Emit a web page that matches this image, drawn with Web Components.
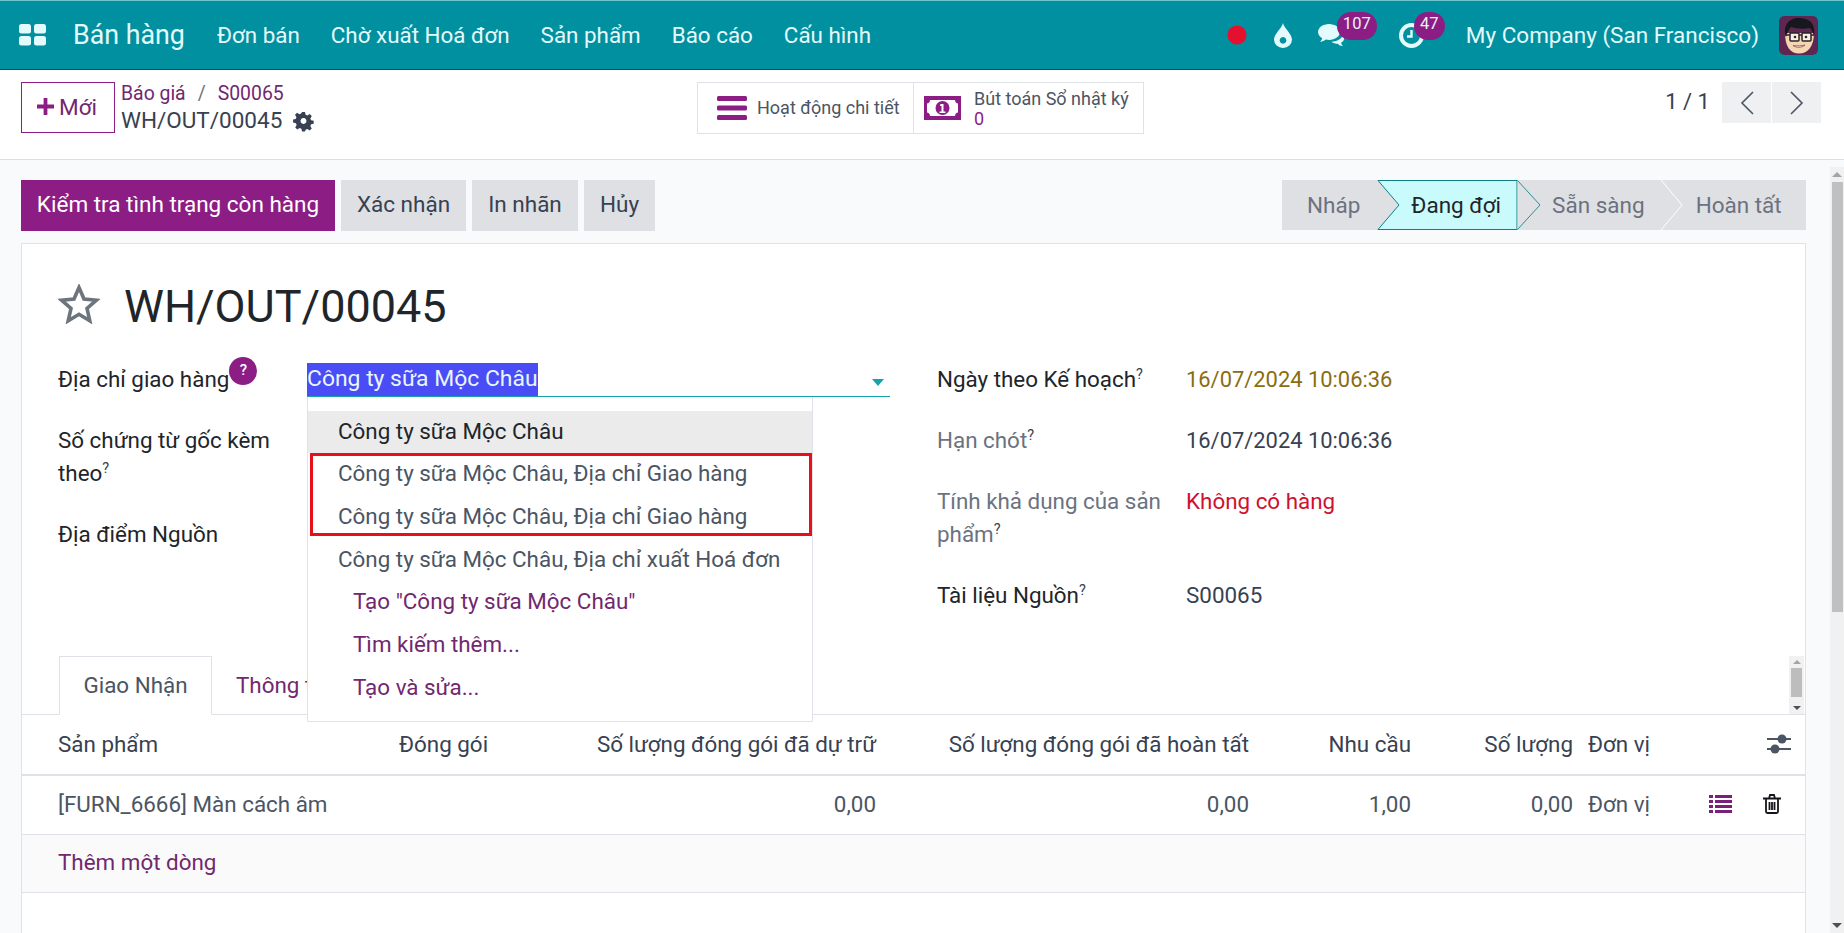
<!DOCTYPE html>
<html lang="vi"><head><meta charset="utf-8"><title>Bán hàng</title>
<style>
html,body{margin:0;height:933px;overflow:hidden;background:#f9fafb;font-family:Roboto,"Liberation Sans",sans-serif;color:#212529}
body{display:flex;flex-direction:column}
:root{--pri:#8c1d85;--link:#71286f;--line:#dee2e6}
</style></head><body>
<x-navbar></x-navbar>
<x-control-panel></x-control-panel>
<x-page>
  <x-action-bar></x-action-bar>
  <x-sheet></x-sheet>
</x-page>
<script>
const def=(name,html)=>{customElements.define(name,class extends HTMLElement{constructor(){super();this.attachShadow({mode:'open'}).innerHTML=html;}});};

def('x-navbar',`<style>
:host{display:flex;align-items:center;height:70px;box-sizing:border-box;background:#00909f;border-top:1px solid #6fc6cf;border-bottom:1px solid #04545c;color:#e4fbfd;font-size:22.4px;flex:none}
svg{display:block}
.apps{margin-left:19px;margin-right:27px}
.brand{font-size:26.8px;margin-right:32px}
.menu{margin-right:31px}
.sp{flex:1}
.ic{position:relative;display:block;flex:none}
.badge{position:absolute;background:#8c1d85;color:#e9f4f6;border-radius:14px;height:28px;font-size:16.5px;line-height:24px;text-align:center;top:-11px}
.co{font-size:22.5px;margin-left:42px;margin-right:20px}
.av{margin-right:26px;border-radius:5px}
</style>
<svg class="apps" width="27" height="22" viewBox="0 0 27 22" fill="#e4fbfd"><rect width="12" height="9.6" rx="2.5"/><rect x="15" width="12" height="9.6" rx="2.5"/><rect y="12" width="12" height="9.6" rx="2.5"/><rect x="15" y="12" width="12" height="9.6" rx="2.5"/></svg>
<span class="brand">Bán hàng</span>
<span class="menu">Đơn bán</span><span class="menu">Chờ xuất Hoá đơn</span><span class="menu">Sản phẩm</span><span class="menu">Báo cáo</span><span class="menu">Cấu hình</span>
<span class="sp"></span>
<svg width="20" height="20" viewBox="0 0 20 20" style="margin-right:27px"><circle cx="10" cy="10" r="9.6" fill="#e3102f"/></svg>
<svg width="18" height="25" viewBox="0 0 18 25" style="margin-right:26px"><path fill-rule="evenodd" fill="#e4fbfd" d="M9 0C10 5 18 11 18 16.5A9 8.5 0 0 1 0 16.5C0 11 8 5 9 0ZM9 14a3.4 3.4 0 1 0 .01 0Z"/></svg>
<span class="ic" style="width:28px;height:24px;margin-right:53px"><svg width="28" height="24" viewBox="0 0 28 24" fill="#e4fbfd"><path d="M11 1C5 1 0 4.6 0 9c0 2.6 1.7 4.8 4.2 6.2-.3 1.4-1.2 2.7-2.3 3.6 2.6 0 4.7-1 6-2.2 1 .2 2 .3 3.1.3 6 0 11-3.5 11-7.9S17 1 11 1Z"/><path d="M24.5 13c-1.6 3.4-6 5.6-11 5.7 1.7 1.4 4 2 6.4 2 1 1.300 2.600 2.300 5.100 2.300-1-.9-1.700-2-1.900-3.200 2.300-1.300 3.400-3.300 2.800-5.300-.3-.5-.8-1.100-1.400-1.500Z"/></svg>
<span class="badge" style="left:19px;width:40px">107</span></span>
<span class="ic" style="width:25px;height:25px"><svg width="25" height="25" viewBox="0 0 25 25" fill="none" stroke="#e4fbfd"><circle cx="12.500" cy="12.500" r="10.500" stroke-width="4"/><path d="M12.500 7v6.500H8" stroke-width="2.400"/></svg>
<span class="badge" style="left:15px;width:31px">47</span></span>
<span class="co">My Company (San Francisco)</span>
<svg class="av" width="39" height="39" viewBox="0 0 39 39"><rect width="39" height="39" rx="5" fill="#5e2752"/><path d="M6 17C6 30 11 37.500 20 37.500S35 30 35 17Z" fill="#f6d6b2"/><path d="M7 21C3 9 11 1 21 2c9 .5 16 5 14 18-1-3-2-6-4-8-6 1-13 1-19-1-2 2-4 6-5 10Z" fill="#17181d"/><rect x="11" y="17" width="9" height="8" rx="1" fill="#fbeee0" stroke="#26262b" stroke-width="1.500"/><rect x="23" y="17" width="9" height="8" rx="1" fill="#fbeee0" stroke="#26262b" stroke-width="1.500"/><path d="M20 19h3M6 19h5M32 19h3" stroke="#26262b" stroke-width="1.500"/><circle cx="16" cy="21" r="1.300" fill="#26262b"/><circle cx="27" cy="21" r="1.300" fill="#26262b"/><path d="M14 29.500c3.500 2.500 8.500 2.500 12-.5-3.500 1-8.500 1.200-12 .5Z" fill="#fff" stroke="#8a4a35" stroke-width=".8"/></svg>`);

def('x-control-panel',`<style>
:host{display:flex;align-items:flex-start;height:90px;box-sizing:border-box;background:#fff;border-bottom:1px solid #dcdfe3;padding:12px 23px 0 21px;flex:none;color:#4b5563}
.new{box-sizing:border-box;width:94px;height:51px;border:1px solid var(--pri);color:var(--link);display:flex;align-items:center;justify-content:center;gap:5px;font-size:22.5px;padding:0 0 2px 0}
.new svg{margin-left:-2px}
.crumb{margin-left:6px;width:576px}
.c1{font-size:19.4px;height:22px;line-height:24px;color:var(--link);white-space:nowrap}
.c1 i{font-style:normal;color:#6b7280;margin:0 12px}
.c2{font-size:22.5px;line-height:27px;color:#374151;display:flex;align-items:center;gap:11px;margin-top:3px}
.stats{display:flex;box-sizing:border-box;width:447px;height:52px;border:1px solid #dfe2e6;color:#4b5563;font-size:18px}
.st{display:flex;align-items:center}
.a{width:216px;padding:0 0 2px 19px;gap:10px;box-sizing:border-box;border-right:1px solid #dfe2e6}
.a svg{margin-top:2px}
.b{padding-left:10px;gap:13px}
.b div{line-height:20px;padding-top:1px}
.b b{display:block;font-weight:400;color:var(--pri)}
.pager{margin-left:auto;display:flex;align-items:flex-start;font-size:22px;color:#374151}
.pager span{line-height:40px;margin-right:11px}
.btn{width:49px;height:41px;background:#eff0f2;display:flex;align-items:center;justify-content:center;margin-left:1px}
</style>
<div class="new"><svg width="17" height="17" viewBox="0 0 18 18" fill="#8c1d85"><path d="M7 0h4v7h7v4h-7v7H7v-7H0V7h7Z"/></svg>Mới</div>
<div class="crumb"><div class="c1">Báo giá<i>/</i>S00065</div><div class="c2">WH/OUT/00045<svg width="21" height="22" viewBox="0 0 24 24" fill="#374151"><path fill-rule="evenodd" d="M10 0h4l.8 3.500 2.400 1 3.100-1.900 2.800 2.800-1.900 3.100 1 2.400 3.500.8v4l-3.500.8-1 2.400 1.900 3.100-2.800 2.800-3.100-1.900-2.400 1L14 26h-4l-.8-3.500-2.400-1-3.100 1.900-2.800-2.800 1.900-3.100-1-2.400L-2 14v-4l3.500-.8 1-2.400L.6 3.700l2.800-2.800 3.100 1.900 2.400-1ZM12 8a4 4 0 1 0 .01 0Z" transform="translate(1.800 1.800) scale(.85)"/></svg></div></div>
<div class="stats"><div class="st a"><svg width="30" height="24" viewBox="0 0 30 24" fill="#8c1d85"><rect width="30" height="5" rx="1.500"/><rect y="9.500" width="30" height="5" rx="1.500"/><rect y="19" width="30" height="5" rx="1.500"/></svg>Hoạt động chi tiết</div>
<div class="st b"><svg width="37" height="24" viewBox="0 0 37 24"><path fill="#8c1d85" fill-rule="evenodd" d="M0 0h37v24H0ZM6 4C6 6 4.500 7.500 3 7.500v9c1.500 0 3 1.500 3 3.500h25c0-2 1.500-3.500 3-3.500v-9c-1.500 0-3-1.500-3-3.500Z"/><circle cx="18.500" cy="12" r="7" fill="#8c1d85"/><path fill="#fff" d="M16.500 8h3v7.500h2V17h-6v-1.500h2V10h-1.500Z"/></svg><div>Bút toán Sổ nhật ký<b>0</b></div></div></div>
<div class="pager"><span>1 / 1</span><div class="btn"><svg width="14" height="24" viewBox="0 0 14 24" fill="none" stroke="#4b5563" stroke-width="1.600"><path d="M13 1 2 12l11 11"/></svg></div><div class="btn"><svg width="14" height="24" viewBox="0 0 14 24" fill="none" stroke="#4b5563" stroke-width="1.600"><path d="M1 1l11 11L1 23"/></svg></div></div>`);

def('x-page',`<style>
:host{display:grid;grid-template-columns:1fr 14px;flex:1;min-height:0;overflow:hidden;position:relative}
.main{padding:20px 24px 0 21px;display:flex;flex-direction:column;min-width:0}
.sb{margin-top:7px;background:#f1f1f1;display:flex;flex-direction:column;align-items:center;height:766px}
.sb u{display:block;width:0;height:0;margin:5px 0;border:5px solid transparent}
.up{border-bottom-color:#a3a3a3!important;border-top:0!important}
.dn{border-top-color:#505050!important;border-bottom:0!important;margin-top:auto!important}
.th{width:11px;height:430px;background:#c0c0c0;margin-top:0}
</style><div class="main"><slot></slot></div>
<div class="sb"><u class="up"></u><div class="th"></div><u class="dn"></u></div>`);

def('x-action-bar',`<style>
:host{display:flex;height:51px;flex:none;font-size:22.5px;color:#374151;margin-bottom:12px}
.b{background:#dee0e4;display:flex;align-items:center;justify-content:center;margin-right:6px;box-sizing:border-box;white-space:nowrap;padding-bottom:3px}
.p{background:var(--pri);color:#fff;width:314px}
</style>
<div class="b p">Kiểm tra tình trạng còn hàng</div><div class="b" style="width:125px">Xác nhận</div><div class="b" style="width:106px">In nhãn</div><div class="b" style="width:71px;margin-right:0">Hủy</div>
<x-statusbar style="margin-left:auto"></x-statusbar>`);

def('x-statusbar',`<style>
:host{display:block;width:524px;height:51px;position:relative;font-size:22.5px;color:#6b7280}
svg{position:absolute;left:0;top:0}
.r{display:flex;height:49px;align-items:center;position:relative;white-space:nowrap}
.r span{position:relative}
.on{color:#212529}
</style>
<svg width="524" height="51" viewBox="0 0 524 51"><rect width="524" height="50" fill="#dee0e4"/><path d="M96 0.500H235V49.500H96L117 25Z" fill="#c9fbfd" stroke="#0f7f87"/><path d="M235.500 0.500 258 25 235.500 49.500" fill="#dee0e4" stroke="#2a8d95"/><path d="M379 0 400 25 379 50" fill="none" stroke="#fff"/></svg>
<div class="r"><span style="margin-left:25px">Nháp</span><span class="on" style="margin-left:51px">Đang đợi</span><span style="margin-left:51px">Sẵn sàng</span><span style="margin-left:51px">Hoàn tất</span></div>`);

def('x-sheet',`<style>
:host{display:block;flex:1;background:#fff;border:1px solid #dfe2e6;border-bottom:0;font-size:22.4px;line-height:33px;min-height:0}
.title{display:flex;align-items:center;height:119px;padding:4px 0 0 36px;box-sizing:border-box}
.title svg{margin-top:-4px}
.title h1{font-weight:400;font-size:45px;margin:2px 0 0 24px;color:#212529;line-height:50px}
.cols{display:grid;grid-template-columns:880px 1fr;padding-left:36px}
.col{display:grid;grid-template-columns:249px 1fr;row-gap:28px;align-content:start;align-items:start}
.col.l{grid-template-columns:249px 583px}
.col.l>div:nth-child(3){margin-top:-1px}
.col.r{margin-left:-1px}
sup{font-size:14.5px;line-height:0;color:#374151;vertical-align:super}
.v{color:#374151}
.date{font-size:21.9px}
.q{display:inline-block;width:28px;height:28px;border-radius:50%;background:var(--pri);color:#fff;font-size:15px;font-weight:500;line-height:26px;text-align:center;position:relative;top:-10px;vertical-align:middle}
.muted{color:#6b7280}
.tabs{display:flex;align-items:flex-end;height:59px;box-sizing:border-box;border-bottom:1px solid var(--line);padding-left:37px;margin-top:44px;position:relative}
.tab{box-sizing:border-box;height:59px;width:153px;border:1px solid var(--line);border-bottom:1px solid #fff;background:#fff;color:#4b5563;text-align:center;line-height:56px;margin-bottom:-1px}
.tab2{color:var(--link);margin-left:24px;line-height:58px;height:58px;white-space:nowrap}
.isb{margin-left:auto;width:15px;height:58px;background:#f1f1f1;display:flex;flex-direction:column;align-items:center;margin-right:1px}
.isb u{display:block;width:0;height:0;border:4px solid transparent;margin:4px 0 4px}
.isb .a{border-bottom-color:#a3a3a3;border-top:0}
.isb .c{border-top-color:#505050;border-bottom:0;margin-top:auto}
.isb i{display:block;width:11px;height:29px;background:#bdbdbd}
.row{display:grid;grid-template-columns:36px 341px 130px 347px 373px 162px 162px 15px 112px 50px 1fr;align-items:center;box-sizing:border-box;color:#4b5563}
.row>*{white-space:nowrap}
.h{height:61px;border-bottom:2px solid var(--line);padding-bottom:1px}
.h span{color:#374151}
.d{height:59px;border-bottom:1px solid var(--line);padding-bottom:2px}
.add{height:58px;border-bottom:1px solid var(--line);background:#fafafa;padding:0 0 2px 36px;box-sizing:border-box;color:var(--link);display:flex;align-items:center}
.e{text-align:right}
</style>
<div class="title"><svg width="42" height="40" viewBox="0 0 42 40" fill="none" stroke="#6c757d" stroke-width="3.600" stroke-linejoin="miter"><path d="M21 3.500 26 15 38.500 16.200 29 24.500 31.800 36.800 21 30.300 10.200 36.800 13 24.500 3.500 16.200 16 15Z"/></svg><h1>WH/OUT/00045</h1></div>
<div class="cols">
<div class="col l">
  <div>Địa chỉ giao hàng<span class="q">?</span></div>
  <x-many2one></x-many2one>
  <div>Số chứng từ gốc kèm<br>theo<sup>?</sup></div><div></div>
  <div>Địa điểm Nguồn</div><div></div>
</div>
<div class="col r">
  <div>Ngày theo Kế hoạch<sup>?</sup></div><div class="date" style="color:#8a6d12">16/07/2024 10:06:36</div>
  <div class="muted">Hạn chót<sup>?</sup></div><div class="v date">16/07/2024 10:06:36</div>
  <div class="muted">Tính khả dụng của sản<br>phẩm<sup>?</sup></div><div style="color:#d0102f">Không có hàng</div>
  <div>Tài liệu Nguồn<sup>?</sup></div><div class="v">S00065</div>
</div>
</div>
<div class="tabs"><div class="tab">Giao Nhận</div><div class="tab2">Thông tin bổ sung</div><div class="isb"><u class="a"></u><i></i><u class="c"></u></div></div>
<div class="row h"><i></i><span>Sản phẩm</span><span>Đóng gói</span><span class="e">Số lượng đóng gói đã dự trữ</span><span class="e">Số lượng đóng gói đã hoàn tất</span><span class="e">Nhu cầu</span><span class="e">Số lượng</span><i></i><span>Đơn vị</span><i></i><svg width="24" height="20" viewBox="0 0 24 20" style="margin-left:17px"><g stroke="#4b5563" stroke-width="2"><path d="M0 5h24M0 15h24"/></g><circle cx="15" cy="5" r="4.500" fill="#4b5563"/><circle cx="8" cy="15" r="4.500" fill="#4b5563"/></svg></div>
<div class="row d"><i></i><span>[FURN_6666] Màn cách âm</span><i></i><span class="e">0,00</span><span class="e">0,00</span><span class="e">1,00</span><span class="e">0,00</span><i></i><span>Đơn vị</span><svg width="23" height="18" viewBox="0 0 23 18" fill="#7b1f78" style="margin-left:9px"><path d="M0 0h4v3H0ZM6 0h17v3H6ZM0 5h4v3H0ZM6 5h17v3H6ZM0 10h4v3H0ZM6 10h17v3H6ZM0 15h4v3H0ZM6 15h17v3H6Z"/></svg><svg width="18" height="20" viewBox="0 0 18 20" style="margin-left:13px" fill="none" stroke="#15161b" stroke-width="1.800"><path d="M0 4.500h18M3 4.500V17.500a1.500 1.500 0 0 0 1.500 1.500h9a1.500 1.500 0 0 0 1.500-1.500V4.500M6 4.500 7 1h4l1 3.500M6.500 8v8M9 8v8M11.500 8v8"/></svg></div>
<div class="add">Thêm một dòng</div>`);

def('x-many2one',`<style>
:host{display:block;position:relative;height:34px;border-bottom:1px solid #17a2ad;box-sizing:border-box}
.sel{display:inline-block;background:#4a4df6;color:#e8f6ff;height:33px;line-height:31px;vertical-align:top;font-size:22.9px}
.car{position:absolute;right:6px;top:16px;width:0;height:0;border:6px solid transparent;border-top:7px solid #17a2ad;border-bottom:0}
</style><span class="sel">Công ty sữa Mộc Châu</span><span class="car"></span><x-dropdown></x-dropdown>`);

def('x-dropdown',`<style>
:host{display:block;position:absolute;left:0;top:34px;width:506px;height:325px;box-sizing:border-box;background:#fff;border:1px solid #dfe2e6;border-top:0;padding-top:14px;z-index:5;color:#4b5563}
.i{height:42.8px;line-height:41px;padding-left:30px;box-sizing:border-box;white-space:nowrap}
.f{background:#ebebeb;color:#212529;height:42px}
.a{color:var(--link);padding-left:45px}
.box{position:absolute;left:2px;top:56px;width:502px;height:83px;box-sizing:border-box;border:3px solid #e5101a}
</style>
<div class="i f">Công ty sữa Mộc Châu</div>
<div class="i">Công ty sữa Mộc Châu, Địa chỉ Giao hàng</div>
<div class="i">Công ty sữa Mộc Châu, Địa chỉ Giao hàng</div>
<div class="i">Công ty sữa Mộc Châu, Địa chỉ xuất Hoá đơn</div>
<div class="i a">Tạo "Công ty sữa Mộc Châu"</div>
<div class="i a">Tìm kiếm thêm...</div>
<div class="i a">Tạo và sửa...</div>
<div class="box"></div>`);
</script>
</body></html>
